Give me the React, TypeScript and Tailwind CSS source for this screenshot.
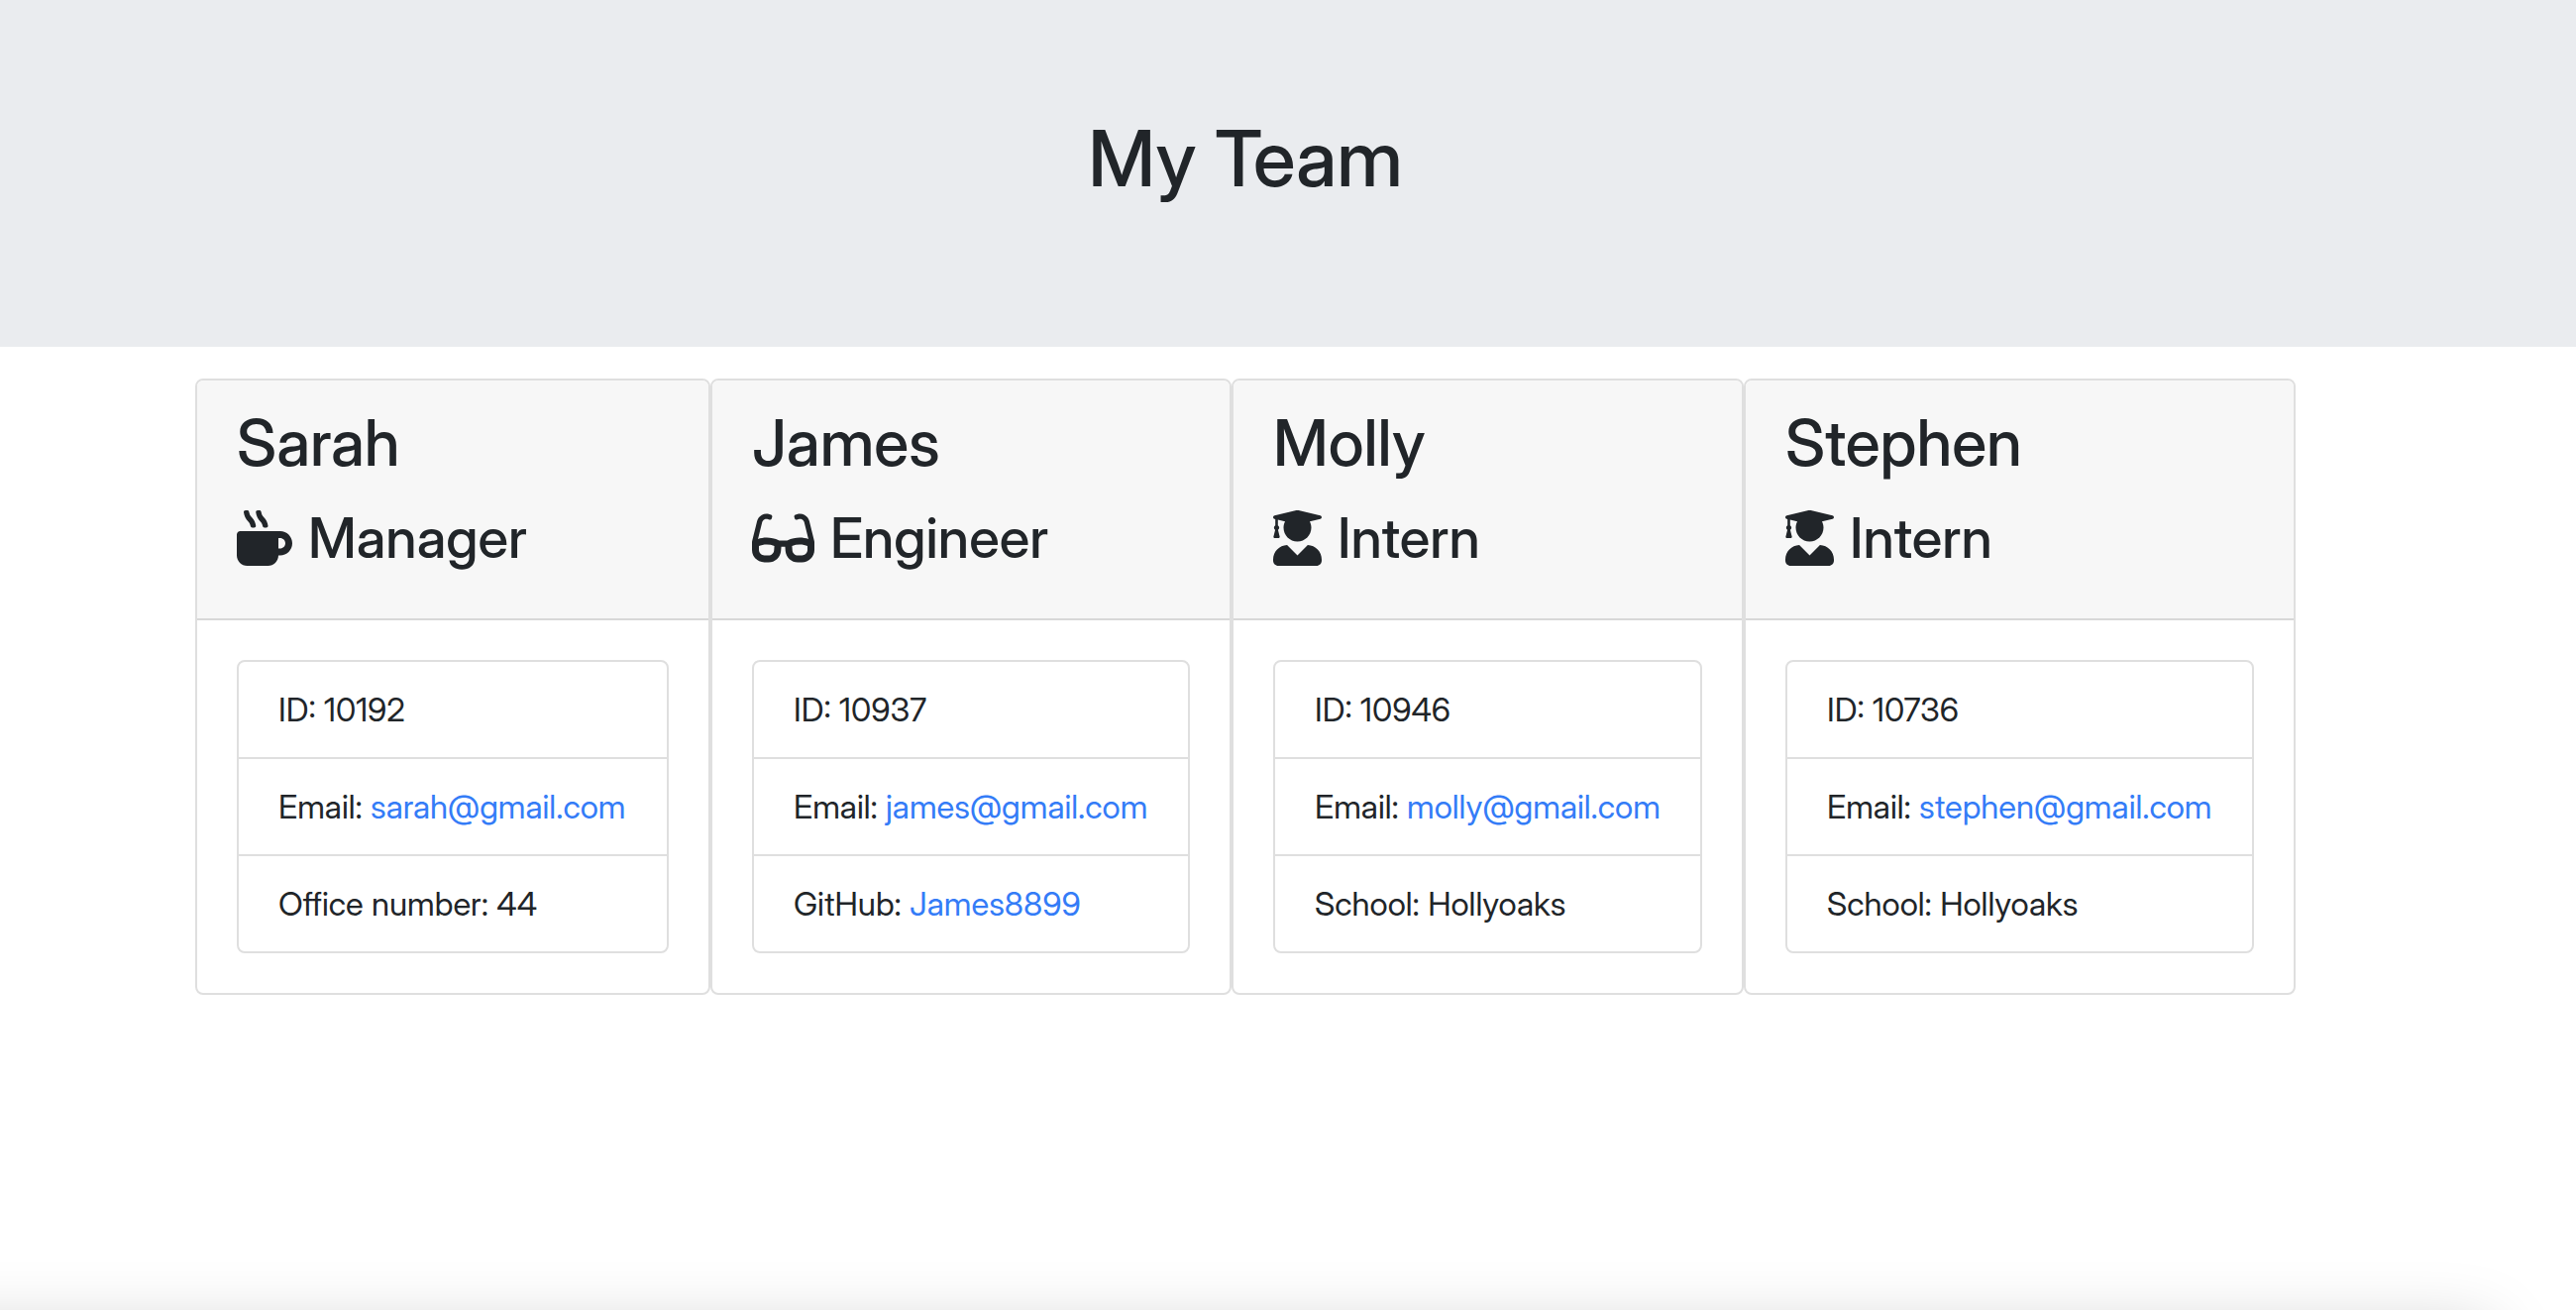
import type { IconType } from "react-icons";
import { FaGlasses, FaMugHot, FaUserGraduate } from "react-icons/fa";

type Detail = { label: string; value: string; href?: string };

type Member = {
  name: string;
  role: string;
  icon: IconType;
  iconClass: string;
  details: Detail[];
};

const team: Member[] = [
  {
    name: "Sarah",
    role: "Manager",
    icon: FaMugHot,
    iconClass: "h-14 w-14",
    details: [
      { label: "ID", value: "10192" },
      { label: "Email", value: "sarah@gmail.com", href: "mailto:sarah@gmail.com" },
      { label: "Office number", value: "44" },
    ],
  },
  {
    name: "James",
    role: "Engineer",
    icon: FaGlasses,
    iconClass: "h-14 w-[63px]",
    details: [
      { label: "ID", value: "10937" },
      { label: "Email", value: "james@gmail.com", href: "mailto:james@gmail.com" },
      { label: "GitHub", value: "James8899", href: "https://github.com/James8899" },
    ],
  },
  {
    name: "Molly",
    role: "Intern",
    icon: FaUserGraduate,
    iconClass: "h-14 w-[49px]",
    details: [
      { label: "ID", value: "10946" },
      { label: "Email", value: "molly@gmail.com", href: "mailto:molly@gmail.com" },
      { label: "School", value: "Hollyoaks" },
    ],
  },
  {
    name: "Stephen",
    role: "Intern",
    icon: FaUserGraduate,
    iconClass: "h-14 w-[49px]",
    details: [
      { label: "ID", value: "10736" },
      { label: "Email", value: "stephen@gmail.com", href: "mailto:stephen@gmail.com" },
      { label: "School", value: "Hollyoaks" },
    ],
  },
];

function MemberCard({ member }: { member: Member }) {
  const Icon = member.icon;
  return (
    <article className="overflow-hidden rounded-lg border-2 border-[#dfdfdf] bg-white">
      <header className="border-b-2 border-[#d8d8d8] bg-[#f7f7f7] px-10 pt-6 pb-12">
        <h2 className="mb-6 text-[64px] leading-[78px] font-medium">{member.name}</h2>
        <h3 className="flex items-center gap-4 text-[56px] leading-[66px] font-medium">
          <Icon className={member.iconClass} aria-hidden="true" />
          {member.role}
        </h3>
      </header>
      <div className="p-10">
        <ul className="divide-y-2 divide-[#dfdfdf] rounded-lg border-2 border-[#dfdfdf]">
          {member.details.map((d) => (
            <li key={d.label} className="px-10 py-6 text-[33px] leading-[48px] whitespace-nowrap">
              {d.label}:{" "}
              {d.href ? (
                <a href={d.href} className="text-[#347cf7] hover:underline">
                  {d.value}
                </a>
              ) : (
                d.value
              )}
            </li>
          ))}
        </ul>
      </div>
    </article>
  );
}

export default function App() {
  return (
    <div className="flex min-h-screen flex-col overflow-hidden bg-white font-['Inter_Display','Inter',sans-serif] text-[#212529]">
      <header className="bg-[#eaecef] pt-28 pr-[86px] pb-[142px]">
        <h1 className="text-center text-[78px] leading-[96px] font-medium">My Team</h1>
      </header>
      <main className="flex justify-center pt-8 pr-[86px]">
        <div className="grid w-full max-w-[2120px] grid-cols-[520fr_526fr_517fr_557fr]">
          {team.map((m) => (
            <MemberCard key={m.name} member={m} />
          ))}
        </div>
      </main>
      <div className="mt-auto h-24 overflow-hidden pt-24 pr-[86px]" aria-hidden="true">
        <div className="-ml-24 h-40 shadow-[0_20px_68px_rgba(0,0,0,0.22)]" />
      </div>
    </div>
  );
}
